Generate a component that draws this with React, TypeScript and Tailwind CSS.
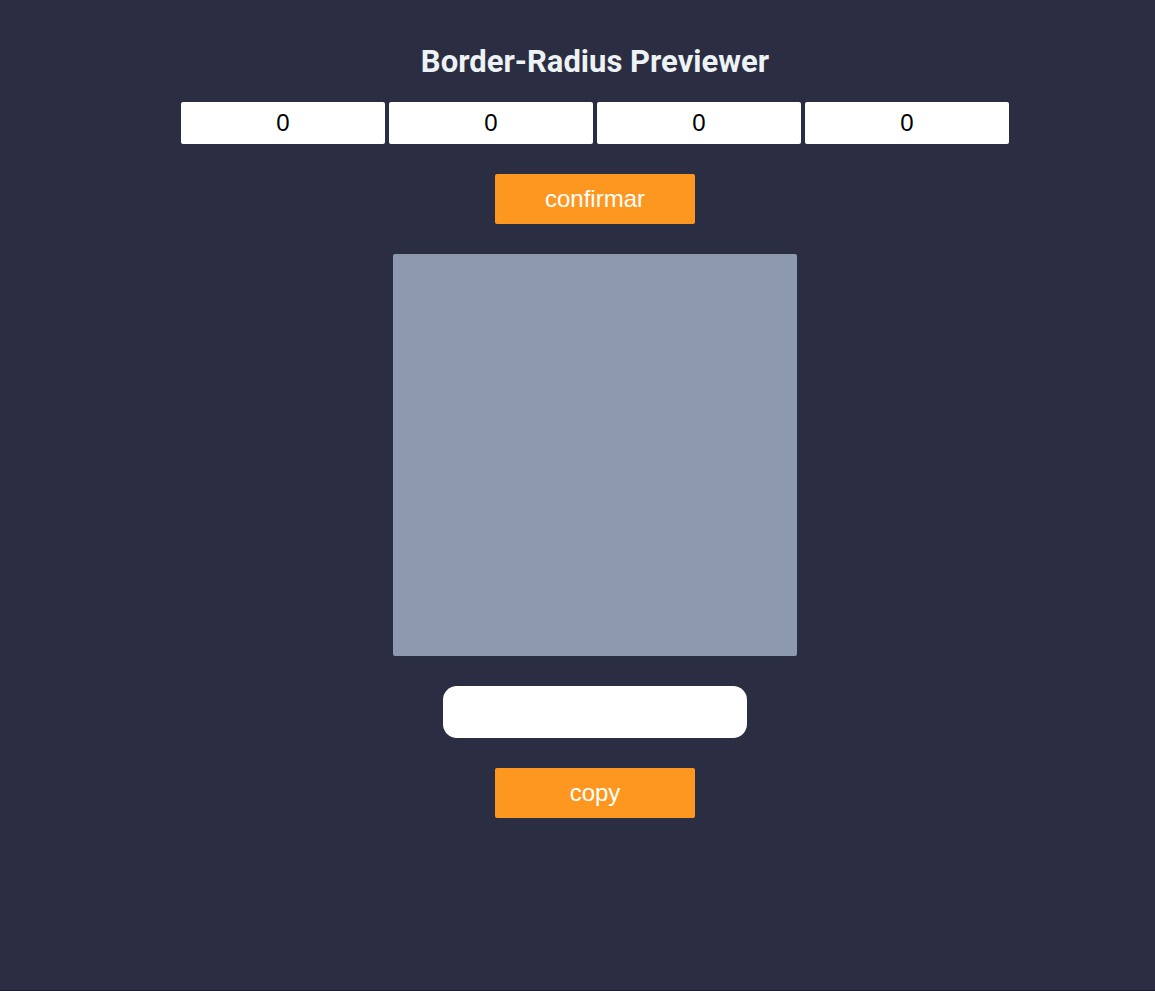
import React, { useState } from "react";

export default function App() {
  const [values, setValues] = useState(["0", "0", "0", "0"]);
  const [radius, setRadius] = useState("0px 0px 0px 0px");

  const handleChange = (i: number, v: string) => {
    const next = [...values];
    next[i] = v;
    setValues(next);
  };

  const handleConfirm = () => {
    setRadius(values.map((v) => `${v || 0}px`).join(" "));
  };

  return (
    <main className="min-h-[991px] bg-[#2b2d42] border-b border-[#1d1e2b] pl-[35px] flex flex-col items-center font-['Liberation_Sans',Arial,sans-serif]">
      <h1 className="mt-[40px] text-[31px] leading-[44px] font-bold text-[#edf2f4] font-['Roboto',sans-serif]">
        Border-Radius Previewer
      </h1>

      <div className="mt-[18px] flex gap-[4px]">
        {values.map((v, i) => (
          <input
            key={i}
            type="text"
            value={v}
            onChange={(e) => handleChange(i, e.target.value)}
            className="w-[204px] h-[42px] bg-white rounded-[2px] text-center text-[24px] text-black outline-none"
          />
        ))}
      </div>

      <button
        type="button"
        onClick={handleConfirm}
        className="mt-[30px] w-[200px] h-[50px] bg-[#fe9720] rounded-[2px] text-white text-[24px]"
      >
        confirmar
      </button>

      <div
        className="mt-[30px] w-[404px] h-[402px] bg-[#8d99ae] rounded-[2px]"
        style={{ borderRadius: radius === "0px 0px 0px 0px" ? undefined : radius }}
      />

      <input
        type="text"
        readOnly
        value=""
        className="mt-[30px] w-[304px] h-[52px] bg-white rounded-[14px] text-center text-[18px] outline-none"
      />

      <button
        type="button"
        className="mt-[30px] w-[200px] h-[50px] bg-[#fe9720] rounded-[2px] text-white text-[24px]"
      >
        copy
      </button>
    </main>
  );
}
